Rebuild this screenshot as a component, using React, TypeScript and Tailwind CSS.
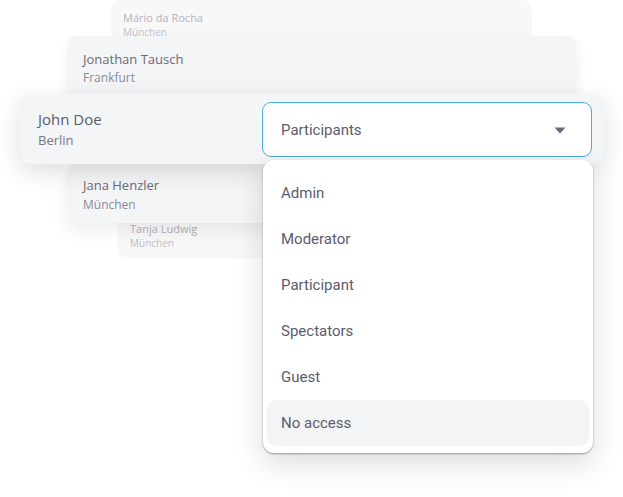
import { useState } from "react";

const roles = ["Admin", "Moderator", "Participant", "Spectators", "Guest", "No access"];

export default function App() {
  const [selected] = useState("No access");

  return (
    <div className="relative w-[623px] h-[497px] overflow-hidden bg-white font-['Open_Sans',sans-serif]">
      {/* stacked people cards */}
      <div className="flex flex-col">
        <div className="relative z-0 ml-[111px] w-[421px] h-[50px] rounded-[10px] bg-[#f8f8f9] pl-[12px] pt-[10px]">
          <p className="text-[11px] leading-[15px] text-[#b4b3bc]">Mário da Rocha</p>
          <p className="text-[10px] leading-[14px] text-[#c0bfc7]">München</p>
        </div>

        <div className="relative z-10 -mt-[14px] ml-[67px] w-[510px] h-[59px] rounded-[10px] bg-[#f4f5f7] pl-[16px] pt-[14px] shadow-[0_6px_14px_rgba(0,0,0,0.06)]">
          <p className="text-[13px] leading-[18px] text-[#6a697a]">Jonathan Tausch</p>
          <p className="text-[12px] leading-[19px] text-[#8b8a97]">Frankfurt</p>
        </div>

        <div className="relative z-30 -mt-[1px] ml-[20px] w-[584px] h-[70px] rounded-[10px] bg-[#f4f5f7] shadow-[0_8px_24px_rgba(0,0,0,0.13)] flex items-center justify-between pl-[18px] pr-[12px]">
          <div className="pt-[1px]">
            <p className="text-[15px] leading-[21px] text-[#5b5a6c]">John Doe</p>
            <p className="text-[13px] leading-[21px] text-[#78778a]">Berlin</p>
          </div>

          <button className="w-[330px] h-[55px] rounded-[9px] border-[1.5px] border-[#4aaee0] bg-white flex items-center justify-between pl-[18px] pr-[25px] pt-[2px] font-['Roboto',sans-serif] text-[15px] text-[#5c5b6e]">
            <span>Participants</span>
            <svg width="12" height="7" viewBox="0 0 12 7">
              <path d="M0.5 0.5 L11.5 0.5 L6 6.5 Z" fill="#6c6b7b" />
            </svg>
          </button>

          {/* open role menu */}
          <div className="absolute left-[243px] top-[66px] w-[330px] rounded-[11px] bg-white px-[4px] pt-[10px] pb-[7px] shadow-[0_1px_2px_rgba(0,0,0,0.35),0_10px_30px_rgba(0,0,0,0.14)] font-['Roboto',sans-serif]">
            {roles.map((r) => (
              <div
                key={r}
                className={
                  "h-[46px] flex items-center pl-[14px] rounded-[9px] text-[15px] text-[#5c5b6e] " +
                  (r === selected ? "bg-[#f3f4f6]" : "")
                }
              >
                {r}
              </div>
            ))}
          </div>
        </div>

        <div className="relative z-20 ml-[67px] w-[510px] h-[59px] rounded-[10px] bg-[#f4f5f7] pl-[16px] pt-[12px] shadow-[0_8px_18px_rgba(0,0,0,0.07)]">
          <p className="text-[13px] leading-[18px] text-[#6a697a]">Jana Henzler</p>
          <p className="text-[12px] leading-[21px] text-[#8b8a97]">München</p>
        </div>

        <div className="relative z-10 -mt-[20px] ml-[118px] w-[420px] h-[55px] rounded-[10px] bg-[#f8f8f9] pl-[12px] pt-[18px]">
          <p className="text-[11px] leading-[15px] text-[#b0afb8]">Tanja Ludwig</p>
          <p className="text-[10px] leading-[14px] text-[#bebdc5]">München</p>
        </div>
      </div>
    </div>
  );
}
